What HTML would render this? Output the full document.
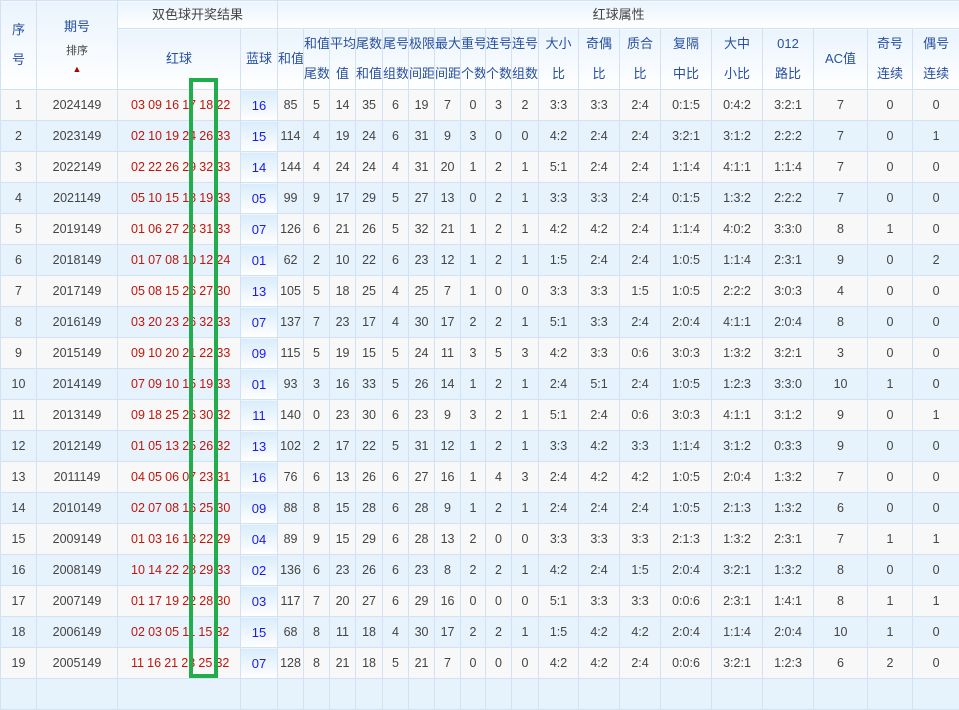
<!DOCTYPE html>
<html><head><meta charset="utf-8"><style>
body{margin:0;width:959px;height:683px;overflow:hidden;background:#e6f3fc;font-family:"Liberation Sans","Noto Sans CJK SC",sans-serif;position:relative}
table{border-collapse:collapse;table-layout:fixed;width:959px;position:absolute;left:0;top:0}
td,th{border:1px solid #d3e2f2;text-align:center;padding:0;font-size:12.5px;color:#444;font-weight:normal;overflow:hidden;white-space:nowrap}
th{font-size:13px;background:linear-gradient(#eaf4fd,#fff);color:#2850a0;line-height:30px}
th.g{color:#444}
tr.h1 th{height:27px;line-height:26px}
tr.h2 th{height:60px}
tbody tr{height:31px}
tbody tr:nth-child(odd) td{background:#f8f8f8}
tbody tr:nth-child(even) td{background:#e6f3fc}
td.r{color:#c0160c;text-align:left;padding-left:13px;font-size:12.5px;word-spacing:-0.3px}
tbody tr td.b{background:linear-gradient(#d9ecfb,#fff);color:#1a1aee;font-size:13px}
.box{position:absolute;left:189px;top:78px;width:21px;height:592px;border:4px solid #22ad4c}
</style></head><body>
<table>
<colgroup><col style="width:36px"><col style="width:81px"><col style="width:123px"><col style="width:37px"><col style="width:26px"><col style="width:26px"><col style="width:26px"><col style="width:27px"><col style="width:26px"><col style="width:26px"><col style="width:26px"><col style="width:25px"><col style="width:26px"><col style="width:27px"><col style="width:40px"><col style="width:41px"><col style="width:41px"><col style="width:51px"><col style="width:51px"><col style="width:51px"><col style="width:54px"><col style="width:45px"><col style="width:47px"></colgroup>
<thead>
<tr class="h1"><th rowspan="2" style="line-height:30px">序<br>号</th><th rowspan="2" style="line-height:18px">期号<br><span style="font-size:11px;color:#444;line-height:14px;position:relative;top:5px">排序<br><span style="color:#a00;font-size:9px;line-height:9px">▲</span></span></th><th colspan="2" class="g">双色球开奖结果</th><th colspan="19" class="g">红球属性</th></tr>
<tr class="h2"><th>红球</th><th>蓝球</th><th>和值</th><th>和值<br>尾数</th><th>平均<br>值</th><th>尾数<br>和值</th><th>尾号<br>组数</th><th>极限<br>间距</th><th>最大<br>间距</th><th>重号<br>个数</th><th>连号<br>个数</th><th>连号<br>组数</th><th>大小<br>比</th><th>奇偶<br>比</th><th>质合<br>比</th><th>复隔<br>中比</th><th>大中<br>小比</th><th>012<br>路比</th><th>AC值</th><th>奇号<br>连续</th><th>偶号<br>连续</th></tr>
</thead>
<tbody>
<tr><td>1</td><td>2024149</td><td class="r">03 09 16 17 18 22</td><td class="b">16</td><td>85</td><td>5</td><td>14</td><td>35</td><td>6</td><td>19</td><td>7</td><td>0</td><td>3</td><td>2</td><td>3:3</td><td>3:3</td><td>2:4</td><td>0:1:5</td><td>0:4:2</td><td>3:2:1</td><td>7</td><td>0</td><td>0</td></tr>
<tr><td>2</td><td>2023149</td><td class="r">02 10 19 24 26 33</td><td class="b">15</td><td>114</td><td>4</td><td>19</td><td>24</td><td>6</td><td>31</td><td>9</td><td>3</td><td>0</td><td>0</td><td>4:2</td><td>2:4</td><td>2:4</td><td>3:2:1</td><td>3:1:2</td><td>2:2:2</td><td>7</td><td>0</td><td>1</td></tr>
<tr><td>3</td><td>2022149</td><td class="r">02 22 26 29 32 33</td><td class="b">14</td><td>144</td><td>4</td><td>24</td><td>24</td><td>4</td><td>31</td><td>20</td><td>1</td><td>2</td><td>1</td><td>5:1</td><td>2:4</td><td>2:4</td><td>1:1:4</td><td>4:1:1</td><td>1:1:4</td><td>7</td><td>0</td><td>0</td></tr>
<tr><td>4</td><td>2021149</td><td class="r">05 10 15 18 19 33</td><td class="b">05</td><td>99</td><td>9</td><td>17</td><td>29</td><td>5</td><td>27</td><td>13</td><td>0</td><td>2</td><td>1</td><td>3:3</td><td>3:3</td><td>2:4</td><td>0:1:5</td><td>1:3:2</td><td>2:2:2</td><td>7</td><td>0</td><td>0</td></tr>
<tr><td>5</td><td>2019149</td><td class="r">01 06 27 28 31 33</td><td class="b">07</td><td>126</td><td>6</td><td>21</td><td>26</td><td>5</td><td>32</td><td>21</td><td>1</td><td>2</td><td>1</td><td>4:2</td><td>4:2</td><td>2:4</td><td>1:1:4</td><td>4:0:2</td><td>3:3:0</td><td>8</td><td>1</td><td>0</td></tr>
<tr><td>6</td><td>2018149</td><td class="r">01 07 08 10 12 24</td><td class="b">01</td><td>62</td><td>2</td><td>10</td><td>22</td><td>6</td><td>23</td><td>12</td><td>1</td><td>2</td><td>1</td><td>1:5</td><td>2:4</td><td>2:4</td><td>1:0:5</td><td>1:1:4</td><td>2:3:1</td><td>9</td><td>0</td><td>2</td></tr>
<tr><td>7</td><td>2017149</td><td class="r">05 08 15 26 27 30</td><td class="b">13</td><td>105</td><td>5</td><td>18</td><td>25</td><td>4</td><td>25</td><td>7</td><td>1</td><td>0</td><td>0</td><td>3:3</td><td>3:3</td><td>1:5</td><td>1:0:5</td><td>2:2:2</td><td>3:0:3</td><td>4</td><td>0</td><td>0</td></tr>
<tr><td>8</td><td>2016149</td><td class="r">03 20 23 26 32 33</td><td class="b">07</td><td>137</td><td>7</td><td>23</td><td>17</td><td>4</td><td>30</td><td>17</td><td>2</td><td>2</td><td>1</td><td>5:1</td><td>3:3</td><td>2:4</td><td>2:0:4</td><td>4:1:1</td><td>2:0:4</td><td>8</td><td>0</td><td>0</td></tr>
<tr><td>9</td><td>2015149</td><td class="r">09 10 20 21 22 33</td><td class="b">09</td><td>115</td><td>5</td><td>19</td><td>15</td><td>5</td><td>24</td><td>11</td><td>3</td><td>5</td><td>3</td><td>4:2</td><td>3:3</td><td>0:6</td><td>3:0:3</td><td>1:3:2</td><td>3:2:1</td><td>3</td><td>0</td><td>0</td></tr>
<tr><td>10</td><td>2014149</td><td class="r">07 09 10 15 19 33</td><td class="b">01</td><td>93</td><td>3</td><td>16</td><td>33</td><td>5</td><td>26</td><td>14</td><td>1</td><td>2</td><td>1</td><td>2:4</td><td>5:1</td><td>2:4</td><td>1:0:5</td><td>1:2:3</td><td>3:3:0</td><td>10</td><td>1</td><td>0</td></tr>
<tr><td>11</td><td>2013149</td><td class="r">09 18 25 26 30 32</td><td class="b">11</td><td>140</td><td>0</td><td>23</td><td>30</td><td>6</td><td>23</td><td>9</td><td>3</td><td>2</td><td>1</td><td>5:1</td><td>2:4</td><td>0:6</td><td>3:0:3</td><td>4:1:1</td><td>3:1:2</td><td>9</td><td>0</td><td>1</td></tr>
<tr><td>12</td><td>2012149</td><td class="r">01 05 13 25 26 32</td><td class="b">13</td><td>102</td><td>2</td><td>17</td><td>22</td><td>5</td><td>31</td><td>12</td><td>1</td><td>2</td><td>1</td><td>3:3</td><td>4:2</td><td>3:3</td><td>1:1:4</td><td>3:1:2</td><td>0:3:3</td><td>9</td><td>0</td><td>0</td></tr>
<tr><td>13</td><td>2011149</td><td class="r">04 05 06 07 23 31</td><td class="b">16</td><td>76</td><td>6</td><td>13</td><td>26</td><td>6</td><td>27</td><td>16</td><td>1</td><td>4</td><td>3</td><td>2:4</td><td>4:2</td><td>4:2</td><td>1:0:5</td><td>2:0:4</td><td>1:3:2</td><td>7</td><td>0</td><td>0</td></tr>
<tr><td>14</td><td>2010149</td><td class="r">02 07 08 16 25 30</td><td class="b">09</td><td>88</td><td>8</td><td>15</td><td>28</td><td>6</td><td>28</td><td>9</td><td>1</td><td>2</td><td>1</td><td>2:4</td><td>2:4</td><td>2:4</td><td>1:0:5</td><td>2:1:3</td><td>1:3:2</td><td>6</td><td>0</td><td>0</td></tr>
<tr><td>15</td><td>2009149</td><td class="r">01 03 16 18 22 29</td><td class="b">04</td><td>89</td><td>9</td><td>15</td><td>29</td><td>6</td><td>28</td><td>13</td><td>2</td><td>0</td><td>0</td><td>3:3</td><td>3:3</td><td>3:3</td><td>2:1:3</td><td>1:3:2</td><td>2:3:1</td><td>7</td><td>1</td><td>1</td></tr>
<tr><td>16</td><td>2008149</td><td class="r">10 14 22 28 29 33</td><td class="b">02</td><td>136</td><td>6</td><td>23</td><td>26</td><td>6</td><td>23</td><td>8</td><td>2</td><td>2</td><td>1</td><td>4:2</td><td>2:4</td><td>1:5</td><td>2:0:4</td><td>3:2:1</td><td>1:3:2</td><td>8</td><td>0</td><td>0</td></tr>
<tr><td>17</td><td>2007149</td><td class="r">01 17 19 22 28 30</td><td class="b">03</td><td>117</td><td>7</td><td>20</td><td>27</td><td>6</td><td>29</td><td>16</td><td>0</td><td>0</td><td>0</td><td>5:1</td><td>3:3</td><td>3:3</td><td>0:0:6</td><td>2:3:1</td><td>1:4:1</td><td>8</td><td>1</td><td>1</td></tr>
<tr><td>18</td><td>2006149</td><td class="r">02 03 05 11 15 32</td><td class="b">15</td><td>68</td><td>8</td><td>11</td><td>18</td><td>4</td><td>30</td><td>17</td><td>2</td><td>2</td><td>1</td><td>1:5</td><td>4:2</td><td>4:2</td><td>2:0:4</td><td>1:1:4</td><td>2:0:4</td><td>10</td><td>1</td><td>0</td></tr>
<tr><td>19</td><td>2005149</td><td class="r">11 16 21 23 25 32</td><td class="b">07</td><td>128</td><td>8</td><td>21</td><td>18</td><td>5</td><td>21</td><td>7</td><td>0</td><td>0</td><td>0</td><td>4:2</td><td>4:2</td><td>2:4</td><td>0:0:6</td><td>3:2:1</td><td>1:2:3</td><td>6</td><td>2</td><td>0</td></tr>
<tr><td>&nbsp;</td><td></td><td></td><td></td><td></td><td></td><td></td><td></td><td></td><td></td><td></td><td></td><td></td><td></td><td></td><td></td><td></td><td></td><td></td><td></td><td></td><td></td><td></td></tr>
</tbody>
</table>
<div class="box"></div>
</body></html>
